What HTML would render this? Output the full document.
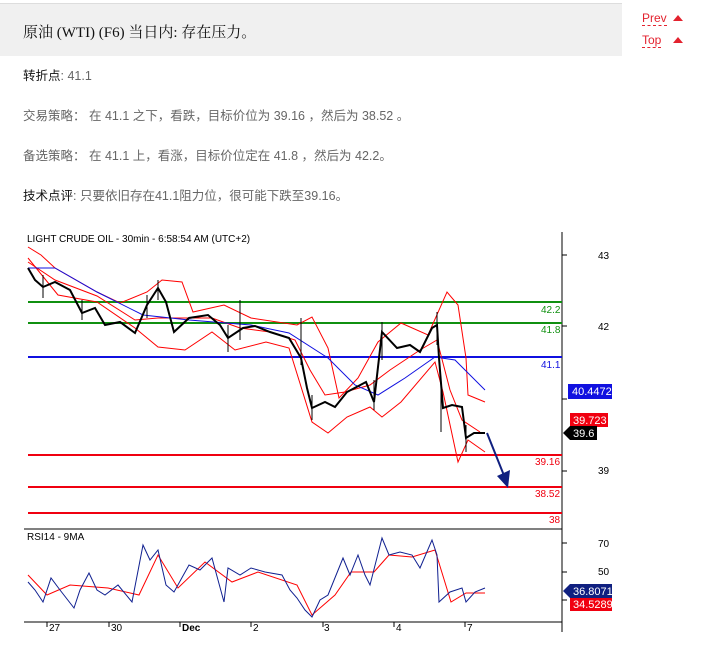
<!DOCTYPE html>
<html><head><meta charset="utf-8"><style>
body{margin:0;width:707px;height:647px;background:#fff;position:relative;overflow:hidden;font-family:"Liberation Sans","Noto Sans CJK SC",sans-serif}
.hd{position:absolute;left:0;top:3px;width:622px;height:52px;background:#f0f0f0;border-top:1px solid #ddd}
.hd span{position:absolute;left:23px;top:17px;font-size:15px;color:#111;font-family:"Liberation Serif","Noto Serif CJK SC",serif}
.nav{position:absolute;left:642px;font-size:12px;color:#e3222e;border-bottom:1px dashed #e3222e;line-height:14px}
.tri{position:absolute;left:673px;width:0;height:0;border-left:5px solid transparent;border-right:5px solid transparent;border-bottom:6px solid #e3222e}
.t{position:absolute;left:23px;font-size:12.5px;color:#666}
.t b{font-weight:normal;color:#111}
</style></head><body>
<div class="hd"><span>原油 (WTI) (F6) 当日内: 存在压力。</span></div>
<div class="nav" style="top:11px">Prev</div><div class="tri" style="top:15px"></div>
<div class="nav" style="top:33px">Top</div><div class="tri" style="top:37px"></div>
<div class="t" style="top:65px"><b>转折点</b>: 41.1</div>
<div class="t" style="top:105px">交易策略： 在 41.1 之下，看跌，目标价位为 39.16 ，然后为 38.52 。</div>
<div class="t" style="top:145px">备选策略： 在 41.1 上，看涨，目标价位定在 41.8 ，然后为 42.2。</div>
<div class="t" style="top:185px"><b>技术点评</b>: 只要依旧存在41.1阻力位，很可能下跌至39.16。</div>
<svg width="707" height="647" style="position:absolute;left:0;top:0" font-family="Liberation Sans,sans-serif" font-size="10">
<text x="27" y="242" fill="#000">LIGHT CRUDE OIL - 30min - 6:58:54 AM (UTC+2)</text>
<line x1="562" y1="232" x2="562" y2="632" stroke="#000"/>
<line x1="24" y1="529" x2="562" y2="529" stroke="#000"/>
<line x1="24" y1="622" x2="562" y2="622" stroke="#000"/>
<g stroke="#000"><line x1="562" y1="255" x2="567" y2="255"/><line x1="562" y1="326" x2="567" y2="326"/><line x1="562" y1="399" x2="567" y2="399"/><line x1="562" y1="471" x2="567" y2="471"/><line x1="562" y1="543" x2="567" y2="543"/><line x1="562" y1="572" x2="567" y2="572"/><line x1="562" y1="600" x2="567" y2="600"/>
<line x1="47" y1="622" x2="47" y2="627"/><line x1="109" y1="622" x2="109" y2="627"/><line x1="180" y1="622" x2="180" y2="627"/><line x1="251" y1="622" x2="251" y2="627"/><line x1="323" y1="622" x2="323" y2="627"/><line x1="394" y1="622" x2="394" y2="627"/><line x1="465" y1="622" x2="465" y2="627"/></g>
<g fill="#000"><text x="598" y="259">43</text><text x="598" y="330">42</text><text x="598" y="474">39</text><text x="598" y="547">70</text><text x="598" y="575">50</text>
<text x="49" y="631">27</text><text x="111" y="631">30</text><text x="182" y="631" font-weight="bold">Dec</text><text x="253" y="631">2</text><text x="324" y="631">3</text><text x="396" y="631">4</text><text x="467" y="631">7</text>
<text x="27" y="540">RSI14 - 9MA</text></g>
<g stroke-width="2"><line x1="28" y1="302" x2="562" y2="302" stroke="#109010"/><line x1="28" y1="323" x2="562" y2="323" stroke="#109010"/><line x1="28" y1="357" x2="562" y2="357" stroke="#1010e0"/>
<line x1="28" y1="455" x2="562" y2="455" stroke="#f00010"/><line x1="28" y1="487" x2="562" y2="487" stroke="#f00010"/><line x1="28" y1="513" x2="562" y2="513" stroke="#f00010"/></g>
<text x="541" y="313" fill="#109010">42.2</text><text x="541" y="333" fill="#109010">41.8</text><text x="541" y="368" fill="#1010e0">41.1</text>
<text x="535" y="465" fill="#f00010">39.16</text><text x="535" y="497" fill="#f00010">38.52</text><text x="549" y="523" fill="#f00010">38</text>
<g fill="none" stroke="#f00" stroke-width="1">
<polyline points="28,247 41,255 55,268 97,292 120,303 147,292 162,280 182,282 193,312 224,305 251,318 297,325 312,317 328,348 339,398 358,378 378,342 401,323 428,335 447,292 458,305 466,358 468,395 485,402"/>
<polyline points="28,258 58,295 97,302 135,328 158,347 185,350 212,332 235,350 266,342 289,348 312,422 328,433 347,417 370,407 382,417 401,402 435,362 443,392 458,462 468,440 485,452"/>
<polyline points="28,262 55,280 97,296 135,320 158,318 185,318 212,318 240,328 270,332 295,340 310,370 325,395 345,392 370,385 390,370 420,350 437,340 450,390 462,420 480,432"/>
</g>
<polyline fill="none" stroke="#1010e0" points="28,268 55,268 97,292 143,315 189,320 251,325 289,333 328,358 355,385 378,395 405,378 435,357 455,360 485,390"/>
<polyline fill="none" stroke="#000" stroke-width="2" points="28,268 35,280 43,287 55,282 70,290 82,313 95,308 105,325 120,322 135,333 147,305 158,288 166,302 174,332 189,318 208,315 220,325 228,338 243,328 255,326 270,332 289,338 301,358 307,388 312,408 325,402 335,407 347,392 366,382 374,402 382,332 397,348 410,345 420,352 432,328 437,325 439,358 443,408 452,405 462,407 466,438 474,433 485,433"/>
<g stroke="#000"><line x1="43" y1="275" x2="43" y2="298"/><line x1="82" y1="300" x2="82" y2="320"/><line x1="147" y1="295" x2="147" y2="318"/><line x1="158" y1="280" x2="158" y2="300"/><line x1="228" y1="325" x2="228" y2="352"/><line x1="240" y1="300" x2="240" y2="340"/><line x1="301" y1="318" x2="301" y2="365"/><line x1="312" y1="395" x2="312" y2="420"/><line x1="374" y1="380" x2="374" y2="410"/><line x1="382" y1="322" x2="382" y2="360"/><line x1="437" y1="312" x2="437" y2="345"/><line x1="441" y1="380" x2="441" y2="432"/><line x1="466" y1="425" x2="466" y2="452"/></g>
<line x1="487" y1="433" x2="505" y2="478" stroke="#102080" stroke-width="2"/><polygon points="497,476 510,470 508,488" fill="#102080"/>
<polyline fill="none" stroke="#f00" points="28,575 47,595 70,585 108,588 139,595 158,555 178,588 205,562 232,582 258,572 297,585 312,615 335,595 351,572 374,572 389,555 412,557 435,550 451,602 466,593 485,593"/>
<polyline fill="none" stroke="#102090" points="28,582 35,590 43,602 51,578 60,590 74,608 80,590 89,573 97,590 105,595 118,585 132,602 143,545 150,560 158,550 166,585 174,592 189,565 200,570 212,558 218,580 224,602 228,568 240,575 251,568 265,572 282,575 290,590 297,598 305,610 312,617 320,600 328,595 343,558 350,575 358,555 365,575 370,585 382,538 389,555 400,552 412,555 420,568 432,540 437,555 439,602 450,592 462,588 466,602 475,592 485,588"/>
<rect x="568" y="384" width="44" height="15" fill="#1010e0"/><text x="572" y="395" fill="#fff" font-size="11">40.4472</text>
<rect x="570" y="413" width="38" height="14" fill="#f00010"/><text x="573" y="424" fill="#fff" font-size="11">39.723</text>
<polygon points="563,433 570,426 597,426 597,440 570,440" fill="#000"/><text x="573" y="437" fill="#fff" font-size="11">39.6</text>
<polygon points="563,591 570,584 612,584 612,598 570,598" fill="#102080"/><text x="573" y="595" fill="#fff" font-size="11">36.8071</text>
<rect x="570" y="598" width="42" height="13" fill="#f00010"/><text x="573" y="608" fill="#fff" font-size="11">34.5289</text>
</svg>
</body></html>
